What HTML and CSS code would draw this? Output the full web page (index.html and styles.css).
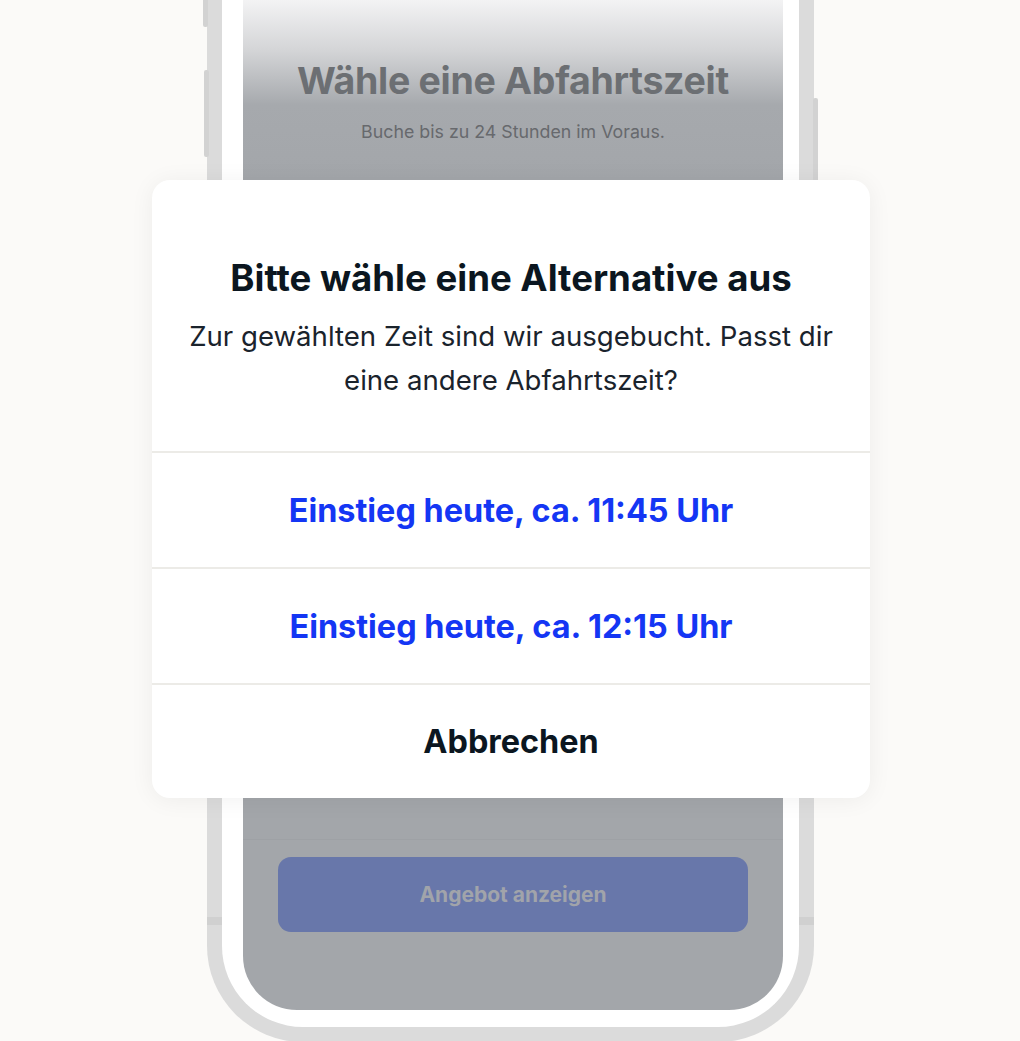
FILE: index.html
```html
<!DOCTYPE html>
<html lang="de">
<head>
<meta charset="utf-8">
<title>Abfahrtszeit</title>
<link rel="stylesheet" href="styles.css">
</head>
<body>
<div class="stage">
  <div class="phone">
    <span class="btn btn-l1"></span>
    <span class="btn btn-l2"></span>
    <span class="btn btn-r1"></span>
    <span class="band band-l"></span>
    <span class="band band-r"></span>
    <div class="bezel">
      <div class="screen">
        <div class="screen-head">
          <h1 class="screen-title">Wähle eine Abfahrtszeit</h1>
          <p class="screen-sub">Buche bis zu 24 Stunden im Voraus.</p>
        </div>
        <div class="screen-body"></div>
        <div class="screen-foot">
          <div class="cta">Angebot anzeigen</div>
        </div>
      </div>
    </div>
  </div>

  <div class="modal">
    <div class="modal-head">
      <h2 class="modal-title">Bitte wähle eine Alternative aus</h2>
      <p class="modal-text">Zur gewählten Zeit sind wir ausgebucht. Passt dir eine andere Abfahrtszeit?</p>
    </div>
    <div class="modal-option option-primary">Einstieg heute, ca. 11:45 Uhr</div>
    <div class="modal-option option-primary">Einstieg heute, ca. 12:15 Uhr</div>
    <div class="modal-option option-cancel">Abbrechen</div>
  </div>
</div>
</body>
</html>
```
FILE: styles.css
```css
* { box-sizing: border-box; }
html, body {
  margin: 0;
  padding: 0;
  background: #fbfaf8;
  overflow: hidden;
}
body {
  font-family: "Inter", "Noto Sans", sans-serif;
}
.stage {
  position: relative;
  width: 1020px;
  height: 1041px;
  overflow: hidden;
}
.phone {
  position: relative;
  margin-left: 207px;
  margin-top: -80px;
  width: 607px;
  height: 1122px;
  border: 15px solid #dbdbdb;
  border-top: none;
  border-radius: 0 0 96px 96px;
  background: #ffffff;
}
.btn {
  position: absolute;
  width: 5px;
  background: #d2d2d2;
  border-radius: 2px;
}
.btn-l1 { left: -19px; top: 60px; height: 47px; }
.btn-l2 { left: -18px; top: 150px; height: 87px; }
.btn-r1 { right: -19px; top: 178px; height: 122px; }
.band {
  position: absolute;
  top: 997px;
  width: 15px;
  height: 8px;
  background: #d0d0d0;
}
.band-l { left: -15px; }
.band-r { right: -15px; }
.bezel {
  height: 100%;
  padding: 0 16px 17px 21px;
}
.screen {
  height: 100%;
  border-radius: 0 0 54px 54px;
  background: linear-gradient(to bottom, #fafafa 0px, #f3f3f4 80px, #d4d5d7 130px, #a6a9ad 185px, #a3a6aa 260px);
  display: flex;
  flex-direction: column;
  overflow: hidden;
}
.screen-head {
  height: 260px;
  padding-top: 139px;
  text-align: center;
}
.screen-title {
  margin: 0;
  font-size: 37.5px;
  font-weight: 700;
  color: #6c6f73;
  letter-spacing: -0.3px;
  line-height: 44px;
}
.screen-sub {
  margin: 18px 0 0;
  font-size: 17.8px;
  color: #67696d;
  line-height: 22px;
}
.screen-body {
  flex: 1;
  border-bottom: 1px solid #9ea1a5;
}
.screen-foot {
  height: 170px;
  padding: 17px 35px 0 35px;
}
.cta {
  height: 75px;
  border-radius: 13px;
  background: #6877aa;
  color: #a1a4aa;
  font-size: 21px;
  font-weight: 700;
  display: flex;
  align-items: center;
  justify-content: center;
}
.modal {
  position: absolute;
  left: 152px;
  top: 180px;
  width: 718px;
  height: 618px;
  background: #ffffff;
  border-radius: 18px;
  box-shadow: 0 2px 24px rgba(0, 0, 0, 0.06);
  display: flex;
  flex-direction: column;
  overflow: hidden;
}
.modal-head {
  height: 273px;
  padding-top: 76px;
  text-align: center;
  border-bottom: 2px solid #ecebe7;
}
.modal-title {
  margin: 0;
  font-size: 36.6px;
  font-weight: 700;
  color: #0b1620;
  line-height: 44px;
}
.modal-text {
  margin: 14px auto 0;
  width: 660px;
  font-size: 27.6px;
  font-weight: 400;
  color: #1a232c;
  line-height: 44px;
}
.modal-option {
  height: 116px;
  display: flex;
  align-items: center;
  justify-content: center;
  font-size: 32.4px;
  font-weight: 700;
  border-bottom: 2px solid #ecebe7;
}
.modal-option:last-child { border-bottom: none; flex: 1; }
.option-primary { color: #1436f4; }
.option-cancel { color: #0b1620; }
```
